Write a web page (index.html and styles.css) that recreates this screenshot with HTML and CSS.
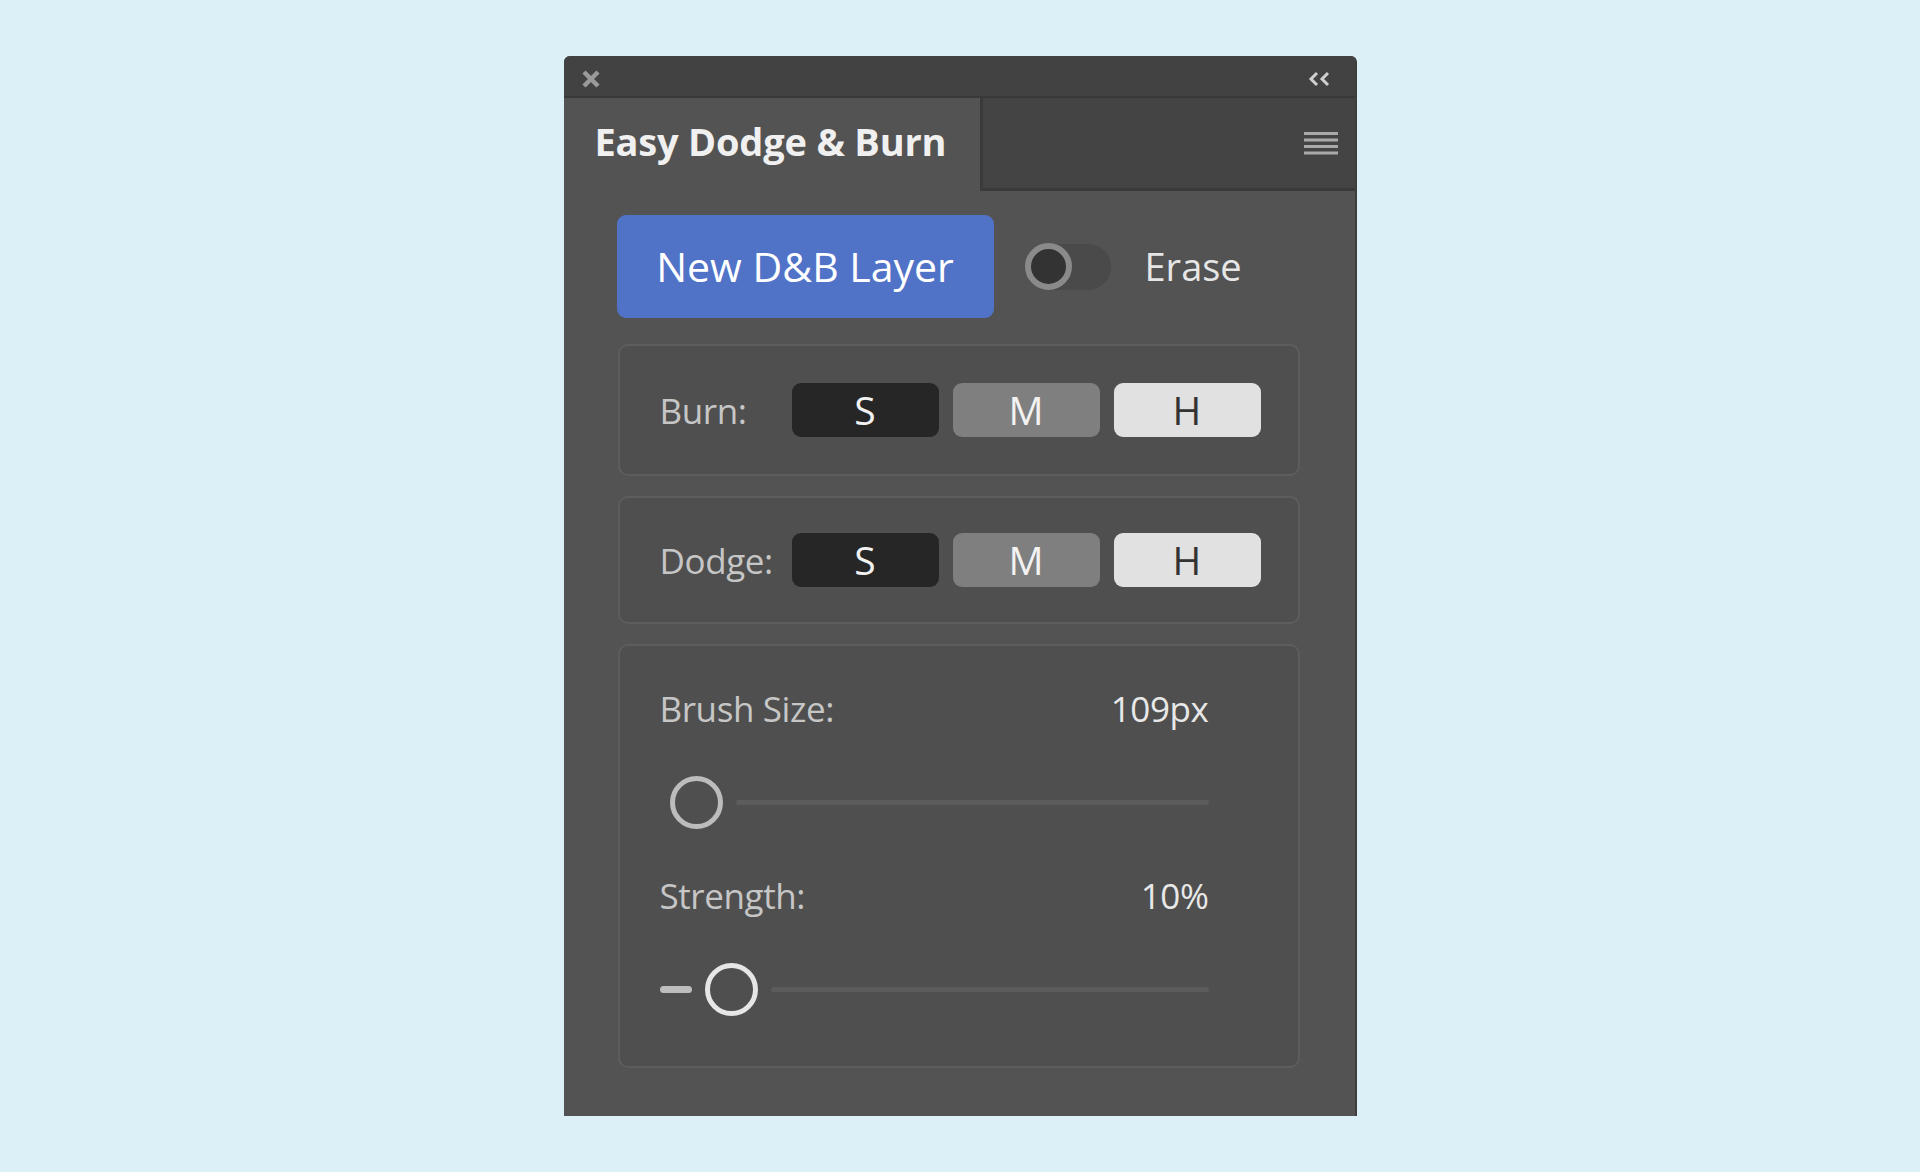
FILE: index.html
```html
<!DOCTYPE html>
<html lang="en">
<head>
<meta charset="utf-8">
<title>Easy Dodge &amp; Burn</title>
<link rel="stylesheet" href="styles.css">
</head>
<body>
<div class="panel">
  <div class="titlebar">
    <svg class="close-icon" width="20" height="20" viewBox="0 0 20 20" aria-label="Close"><path d="M3 3L17 17M17 3L3 17" stroke="#9a9a9a" stroke-width="4.5" fill="none"/></svg>
    <svg class="collapse-icon" width="23" height="16" viewBox="0 0 23 16" aria-label="Collapse"><path d="M9 2L3 8L9 14M20 2L14 8L20 14" fill="none" stroke="#cfcfcf" stroke-width="3"/></svg>
  </div>
  <div class="tabs">
    <div class="tab-active">Easy Dodge &amp; Burn</div>
    <div class="tab-rest">
      <svg class="menu-icon" width="34" height="23" viewBox="0 0 34 23" aria-label="Menu">
        <rect x="0" y="0" width="34" height="3" fill="#a9a9a9"/>
        <rect x="0" y="6.5" width="34" height="3" fill="#a9a9a9"/>
        <rect x="0" y="13" width="34" height="3" fill="#a9a9a9"/>
        <rect x="0" y="19.5" width="34" height="3" fill="#a9a9a9"/>
      </svg>
    </div>
  </div>
  <div class="content">
    <div class="top-row">
      <div class="primary-btn">New D&amp;B Layer</div>
      <div class="toggle"><span class="toggle-knob"></span></div>
      <span class="erase">Erase</span>
    </div>
    <div class="box seg-box burn-box">
      <span class="label">Burn:</span>
      <span class="seg seg-s">S</span>
      <span class="seg seg-m">M</span>
      <span class="seg seg-h">H</span>
    </div>
    <div class="box seg-box dodge-box">
      <span class="label">Dodge:</span>
      <span class="seg seg-s">S</span>
      <span class="seg seg-m">M</span>
      <span class="seg seg-h">H</span>
    </div>
    <div class="box slider-box">
      <div class="slider-head">
        <span class="label">Brush Size:</span>
        <span class="value">109px</span>
      </div>
      <div class="slider brush-slider">
        <span class="fill" style="width:0px"></span>
        <span class="knob"></span>
        <span class="track"></span>
      </div>
      <div class="slider-head second">
        <span class="label">Strength:</span>
        <span class="value">10%</span>
      </div>
      <div class="slider strength-slider">
        <span class="fill" style="width:32px"></span>
        <span class="knob"></span>
        <span class="track"></span>
      </div>
    </div>
  </div>
</div>
</body>
</html>
```

FILE: styles.css
```css
* { box-sizing: border-box; }

html, body {
  margin: 0;
  padding: 0;
}

body {
  background: #dcf0f7;
  height: 100vh;
  display: flex;
  align-items: center;
  justify-content: center;
  font-family: "Open Sans", "Noto Sans", sans-serif;
}

.panel {
  width: 793px;
  height: 1060px;
  background: #535353;
  border-radius: 6px 6px 0 0;
  display: flex;
  flex-direction: column;
  overflow: hidden;
  border-right: 2px solid #3e3e3e;
}

.titlebar {
  height: 42px;
  flex: none;
  background: #424242;
  border-bottom: 2px solid #393939;
  display: flex;
  align-items: center;
  justify-content: space-between;
  padding: 6px 24px 0 17px;
}

.close-icon, .collapse-icon, .menu-icon { display: block; }

.tabs {
  height: 93px;
  flex: none;
  display: flex;
}

.tab-active {
  width: 416px;
  background: #535353;
  padding: 19px 0 0 31px;
  color: #f0f0f0;
  font-weight: 700;
  font-size: 38px;
  line-height: 48px;
  letter-spacing: -0.2px;
  white-space: nowrap;
}

.tab-rest {
  flex: 1;
  background: #444444;
  border-left: 3px solid #3a3a3a;
  border-bottom: 3px solid #3a3a3a;
  display: flex;
  align-items: center;
  justify-content: flex-end;
  padding: 0 17px 0 0;
}

.content {
  padding: 24px 0 0 53px;
}

.top-row {
  display: flex;
  align-items: center;
  height: 103px;
}

.primary-btn {
  width: 377px;
  height: 103px;
  background: #5073c8;
  border-radius: 9px;
  color: #ffffff;
  font-size: 41px;
  display: flex;
  align-items: center;
  justify-content: center;
  padding-bottom: 2px;
}

.toggle {
  margin-left: 31px;
  width: 86px;
  height: 46px;
  border-radius: 23px;
  background: #4a4a4a;
  display: flex;
  align-items: center;
}

.toggle-knob {
  width: 47px;
  height: 47px;
  border-radius: 50%;
  background: #333333;
  border: 6px solid #8a8a8a;
}

.erase {
  margin-left: 34px;
  color: #e6e6e6;
  font-size: 38px;
  padding-bottom: 2px;
}

.box {
  width: 682px;
  margin-left: 1px;
  background: #4f4f4f;
  border: 2px solid #5d5d5d;
  border-radius: 10px;
}

.seg-box {
  display: grid;
  grid-template-columns: 118px 147px 147px 147px;
  column-gap: 14px;
  align-items: center;
  padding: 0 0 0 40px;
}

.burn-box {
  margin-top: 26px;
  height: 132px;
}

.dodge-box {
  margin-top: 20px;
  height: 128px;
}

.label {
  color: #c6c6c6;
  font-size: 35px;
  letter-spacing: -0.4px;
  white-space: nowrap;
}

.seg {
  height: 54px;
  border-radius: 9px;
  display: flex;
  align-items: center;
  justify-content: center;
  font-size: 39px;
  padding-bottom: 2px;
}

.seg-s { background: #262626; color: #f2f2f2; }
.seg-m { background: #7f7f7f; color: #f2f2f2; }
.seg-h { background: #e1e1e1; color: #333333; }

.slider-box {
  margin-top: 20px;
  height: 424px;
  padding: 39px 89px 0 40px;
}

.slider-head {
  height: 46px;
  display: flex;
  align-items: center;
  justify-content: space-between;
}

.slider-head.second { margin-top: 43px; }

.value {
  color: #e8e8e8;
  font-size: 35px;
  letter-spacing: -0.4px;
}

.slider {
  margin-top: 45px;
  height: 53px;
  display: flex;
  align-items: center;
  gap: 13px;
}

.slider .fill {
  flex: none;
  height: 7px;
  border-radius: 4px;
  background: #bdbdbd;
}

.slider .knob {
  flex: none;
  width: 53px;
  height: 53px;
  border-radius: 50%;
  border: 5px solid #bcbcbc;
  background: transparent;
}

.strength-slider .knob { border-color: #e6e6e6; }

.brush-slider { gap: 0; }
.brush-slider .knob { margin: 0 13px 0 10px; }

.slider .track {
  flex: 1;
  height: 5px;
  border-radius: 3px;
  background: #5c5c5c;
}
```
